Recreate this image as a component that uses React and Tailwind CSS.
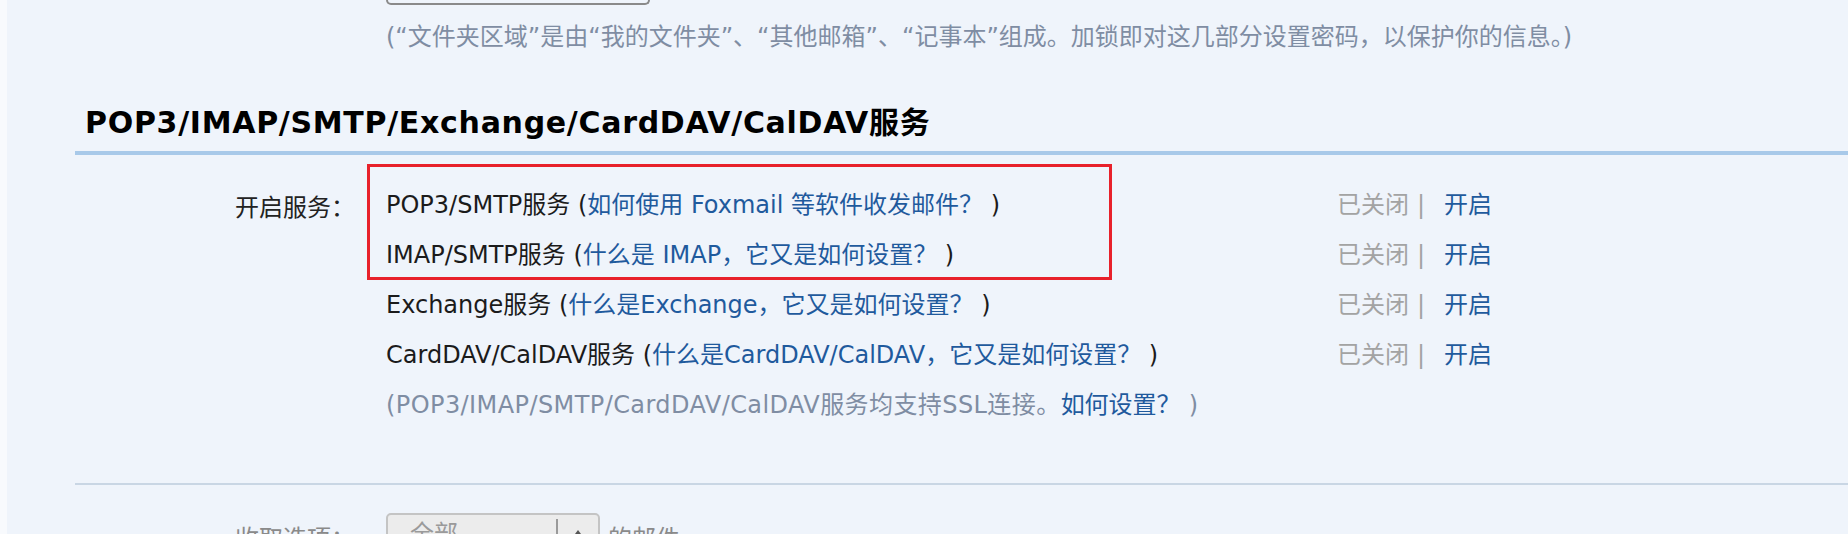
import React from "react";

const F = { fontFamily: '"DejaVu Sans", "Noto Sans CJK SC", sans-serif' };

function Status() {
  return (
    <div className="flex items-center text-[24px] text-[#a3a3a3]">
      <span>已关闭</span>
      <span className="ml-[8px]">|</span>
      <span className="ml-[19px] text-[#1f5a9d]">开启</span>
    </div>
  );
}

function Row({ name, link, status = true }) {
  return (
    <div className="grid h-[50px] grid-cols-[951px_auto] items-center">
      <div className="whitespace-nowrap text-[24px] text-[#1b1b1b]">
        {name} (<span className="text-[#1f5a9d]">{link}</span> )
      </div>
      {status ? <Status /> : <div />}
    </div>
  );
}

export default function App() {
  return (
    <div className="flex h-[534px] w-[1848px] overflow-hidden bg-[#eff4fb]" style={F}>
      <div className="w-[7px] shrink-0 bg-[#f8fafd]" />
      <div className="relative flex-1">
        {/* top remnant box */}
        <div className="ml-[379px] h-[5px] w-[264px] rounded-b-[5px] border-x-2 border-b-2 border-[#8a8a8a]" />
        <div className="ml-[379px] mt-[16px] h-[32px] whitespace-nowrap text-[24px] leading-[32px] text-[#7f8da3]">
          (“文件夹区域”是由“我的文件夹”、“其他邮箱”、“记事本”组成。加锁即对这几部分设置密码，以保护你的信息。)
        </div>

        <div className="ml-[68px] mt-[50px]">
          <h2 className="h-[40px] pl-[10px] text-[30px] font-bold leading-[40px] tracking-[0.7px] text-black">
            POP3/IMAP/SMTP/Exchange/CardDAV/CalDAV服务
          </h2>
          <div className="mt-[8px] h-[4px] bg-[#a8c9e9]" />

          <div className="mt-[25px] flex">
            <div className="w-[311px] shrink-0 pl-[160px] pt-[3px] text-[24px] leading-[50px] text-[#222]">
              开启服务：
            </div>
            <div className="flex flex-col">
              <Row name="POP3/SMTP服务" link="如何使用 Foxmail 等软件收发邮件？" />
              <Row name="IMAP/SMTP服务" link="什么是 IMAP，它又是如何设置？" />
              <Row name="Exchange服务" link="什么是Exchange，它又是如何设置？" />
              <Row name="CardDAV/CalDAV服务" link="什么是CardDAV/CalDAV，它又是如何设置？" />
              <div className="flex h-[50px] items-center whitespace-nowrap text-[24px] text-[#7f8da3]">
                <span className="tracking-[0.42px]">(POP3/IMAP/SMTP/CardDAV/CalDAV服务均支持SSL连接。</span>
                <span className="text-[#1f5a9d]">如何设置？</span>
                <span className="ml-[8px]">)</span>
              </div>
            </div>
          </div>

          <div className="mt-[53px] h-[2px] bg-[#c9d6e4]" />

          <div className="mt-[28px] flex items-start">
            <div className="w-[311px] shrink-0 pl-[160px] pt-[6px] text-[24px] leading-[40px] text-[#8a8a8a]">
              收取选项：
            </div>
            <div className="flex h-[42px] w-[214px] items-center rounded-[5px] border-2 border-[#c4c4c4] bg-[#ececec]">
              <span className="ml-[22px] flex-1 text-[24px] text-[#9a9a9a]">全部</span>
              <div className="h-[30px] w-[2px] bg-[#9a9a9a]" />
              <div className="flex w-[40px] justify-center">
                <svg width="14" height="10" viewBox="0 0 14 10"><path d="M7 1 L13 9 L1 9 Z" fill="#555" /></svg>
              </div>
            </div>
            <div className="ml-[8px] pt-[6px] text-[24px] leading-[40px] text-[#8a8a8a]">的邮件</div>
          </div>
        </div>

        {/* red annotation box */}
        <div className="absolute left-[360px] top-[164px] h-[116px] w-[745px] border-[3px] border-[#e8212b]" />
      </div>
    </div>
  );
}
